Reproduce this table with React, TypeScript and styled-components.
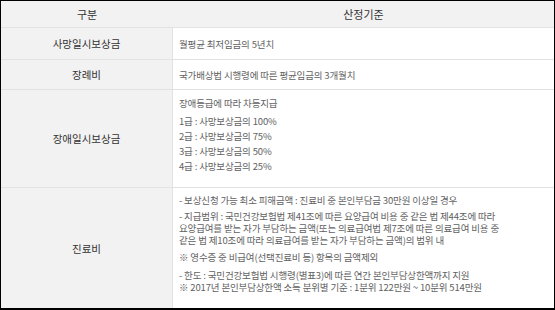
import React from 'react';
import styled, { createGlobalStyle } from 'styled-components';

const Global = createGlobalStyle`
  html, body {
    margin: 0;
    padding: 0;
    background: #fff;
  }
`;

const Frame = styled.div`
  width: 555px;
  height: 310px;
  box-sizing: border-box;
  border: 1px solid #000;
  border-bottom-width: 2px;
  display: flex;
  flex-direction: column;
  font-family: "Noto Sans CJK KR", "Noto Sans", sans-serif;
  overflow: hidden;
`;

const HeadRow = styled.div`
  display: grid;
  grid-template-columns: 172px 1fr;
  height: 27px;
  box-sizing: border-box;
  background: #f2f2f2;
  border-bottom: 1px solid #e2e2e2;
`;

const HeadCell = styled.div`
  display: flex;
  align-items: center;
  justify-content: center;
  font-size: 11px;
  color: #333;
  padding-bottom: 1px;
`;

const Row = styled.div<{ $h: number; $last?: boolean }>`
  display: grid;
  grid-template-columns: 172px 1fr;
  height: ${(p) => p.$h}px;
  box-sizing: border-box;
  border-bottom: ${(p) => (p.$last ? 'none' : '1px solid #e2e2e2')};
  flex: ${(p) => (p.$last ? '1' : 'none')};
`;

const Label = styled.div`
  background: #f2f2f2;
  border-right: 1px solid #e2e2e2;
  display: flex;
  align-items: center;
  justify-content: center;
  font-size: 10.5px;
  color: #333;
`;

const Content = styled.div<{ $center?: boolean; $top?: number }>`
  display: flex;
  flex-direction: column;
  justify-content: ${(p) => (p.$center ? 'center' : 'flex-start')};
  padding: ${(p) => p.$top ?? 0}px 0 0 6px;
  font-size: 9.5px;
  letter-spacing: -0.15px;
  color: #626262;
  white-space: nowrap;
`;

const Line = styled.div<{ $gap?: number }>`
  line-height: 12px;
  margin-bottom: ${(p) => p.$gap ?? 0}px;
`;

const Grade = styled.div`
  line-height: 15px;
`;

const grades = [
  ['1급', '100%'],
  ['2급', '75%'],
  ['3급', '50%'],
  ['4급', '25%'],
];

export default function App() {
  return (
    <>
      <Global />
      <Frame>
        <HeadRow>
          <HeadCell>구분</HeadCell>
          <HeadCell>산정기준</HeadCell>
        </HeadRow>

        <Row $h={32}>
          <Label>사망일시보상금</Label>
          <Content $center>
            <Line>월평균 최저임금의 5년치</Line>
          </Content>
        </Row>

        <Row $h={30}>
          <Label>장례비</Label>
          <Content $center>
            <Line>국가배상법 시행령에 따른 평균임금의 3개월치</Line>
          </Content>
        </Row>

        <Row $h={98}>
          <Label>장애일시보상금</Label>
          <Content $top={6}>
            <Grade style={{ marginBottom: 3 }}>장애등급에 따라 차등지급</Grade>
            {grades.map(([g, pct]) => (
              <Grade key={g}>
                {g} : 사망보상금의 {pct}
              </Grade>
            ))}
          </Content>
        </Row>

        <Row $h={120} $last>
          <Label>진료비</Label>
          <Content $top={6}>
            <Line $gap={4}>- 보상신청 가능 최소 피해금액 : 진료비 중 본인부담금 30만원 이상일 경우</Line>
            <Line>- 지급범위 : 국민건강보험법 제41조에 따른 요양급여 비용 중 같은 법 제44조에 따라</Line>
            <Line>요양급여를 받는 자가 부담하는 금액(또는 의료급여법 제7조에 따른 의료급여 비용 중</Line>
            <Line $gap={5}>같은 법 제10조에 따라 의료급여를 받는 자가 부담하는 금액)의 범위 내</Line>
            <Line $gap={6}>※ 영수증 중 비급여(선택진료비 등) 항목의 금액제외</Line>
            <Line>- 한도 : 국민건강보험법 시행령(별표3)에 따른 연간 본인부담상한액까지 지원</Line>
            <Line>※ 2017년 본인부담상한액 소득 분위별 기준 : 1분위 122만원 ~ 10분위 514만원</Line>
          </Content>
        </Row>
      </Frame>
    </>
  );
}
